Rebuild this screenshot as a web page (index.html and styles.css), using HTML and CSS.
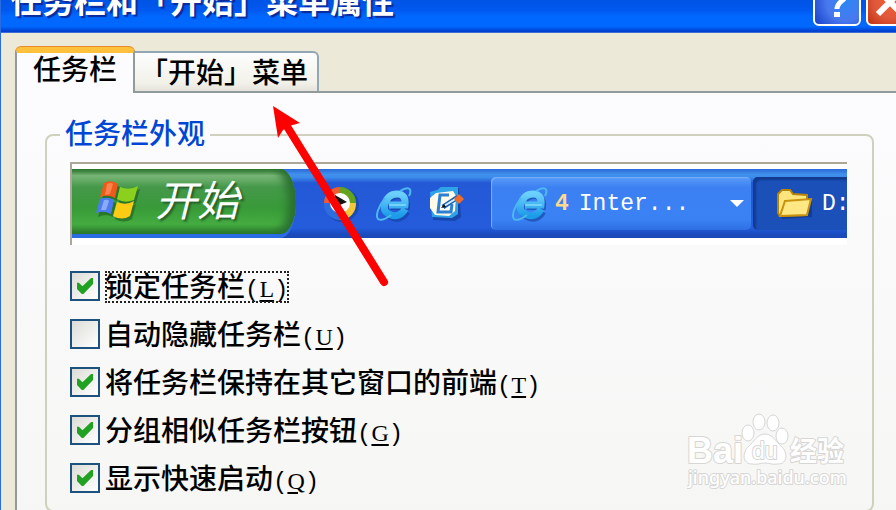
FILE: index.html
```html
<!DOCTYPE html>
<html lang="zh-CN">
<head>
    <meta charset="UTF-8">
    <meta name="viewport" content="width=device-width, initial-scale=1.0">
    <title>任务栏和「开始」菜单属性</title>
    <link rel="stylesheet" href="styles.css">
</head>
<body>
    <!-- shared icon shapes -->
    <svg class="defs" width="0" height="0" aria-hidden="true">
        <defs>
            <linearGradient id="ieBlue" x1="0" y1="0" x2="0" y2="1">
                <stop offset="0" stop-color="#6cd0fc"/>
                <stop offset="1" stop-color="#1c9be8"/>
            </linearGradient>
            <symbol id="ie" viewBox="0 0 36 36">
                <path d="M31 26 C28 32 22 34 17 32 C11 30 9 26 10 20 C12 13 16 10 22 10 C29 10 32 14 31 21 L15 21" fill="none" stroke="#123f9c" stroke-width="6" opacity="0.6"/>
                <path d="M29 23 C26 29 20 31 15 29 C9 27 7 23 9 18 C11 11 15 8 21 8 C27 8 30 12 29 19 L13 19" fill="none" stroke="url(#ieBlue)" stroke-width="7"/>
                <path d="M13 19 L30 19" stroke="#a8ecff" stroke-width="1"/>
                <path d="M24 5 C32 0 37 2 33 10 M9 12 C3 20 -1 29 2 33 C5 35 11 32 15 29" fill="none" stroke="#4cb8ee" stroke-width="2"/>
            </symbol>
        </defs>
    </svg>

    <div class="window">
        <header class="titlebar">
            <h1>任务栏和「开始」菜单属性</h1>
            <div class="controls">
                <button type="button" class="ctl help" aria-label="帮助">
                    <svg width="30" height="40" viewBox="0 0 30 40"><path d="M6 10 C6 1 24 1 24 10 C24 17 15 17 15 25" fill="none" stroke="#fff" stroke-width="5"/><rect x="12" y="28" width="6" height="5" fill="#fff"/></svg>
                </button>
                <button type="button" class="ctl close" aria-label="关闭">
                    <svg width="30" height="40" viewBox="0 0 30 40"><path d="M3 30 L27 6 M3 6 L27 30" stroke="#fff" stroke-width="6"/></svg>
                </button>
            </div>
        </header>

        <nav class="tabs">
            <button type="button" class="tab active">任务栏</button>
            <button type="button" class="tab">「开始」菜单</button>
        </nav>

        <main class="panel">
            <fieldset>
                <legend>任务栏外观</legend>
                <div class="group">
                    <div class="preview">
                        <div class="taskbar">
                            <div class="start">
                                <svg width="46" height="42" viewBox="0 0 46 42">
                                    <g transform="translate(2 2)" fill="#174d18" opacity="0.5">
                                        <path d="M8 3 Q15 -1 22 4 L19 18 Q12 13 4 17Z M24 7 Q33 11 42 6 L38 20 Q29 24 21 19Z M4 20 Q11 16 18 20 L15 34 Q8 30 0 34Z M21 22 Q30 26 38 21 L34 36 Q26 41 17 36Z"/>
                                    </g>
                                    <path d="M8 2 Q15 -2 22 3 L19 17 Q12 13 4 16Z" fill="#ef5a1c"/>
                                    <path d="M11 3 Q15 1 17 3 L14 13 L9 14Z" fill="#ffa070" opacity="0.6"/>
                                    <path d="M24 6 Q33 10 42 5 L38 19 Q29 23 21 18Z" fill="#8ad01c"/>
                                    <path d="M4 18 Q11 15 18 19 L15 33 Q8 29 0 32Z" fill="#4a7cf0"/>
                                    <path d="M8 19 Q12 18 13 20 L10 29 L5 29Z" fill="#b7ccff" opacity="0.6"/>
                                    <path d="M21 21 Q30 25 38 20 L34 35 Q26 40 17 35Z" fill="#fccc14"/>
                                </svg>
                                <span>开始</span>
                            </div>
                            <div class="quick">
                                <svg width="36" height="36" viewBox="0 0 36 36">
                                    <circle cx="19" cy="19" r="17" fill="#12388f" opacity="0.5"/>
                                    <path d="M17 17 L17 1 A16 16 0 0 0 1 17Z" fill="#ef5a30"/>
                                    <path d="M17 17 L17 1 A16 16 0 0 1 33 17Z" fill="#64a41c"/>
                                    <path d="M17 17 L33 17 A16 16 0 0 1 17 34Z" fill="#f4c63a"/>
                                    <path d="M17 17 L17 34 A16 16 0 0 1 1 17Z" fill="#2c6ee0"/>
                                    <circle cx="17" cy="17" r="10" fill="#fff"/>
                                    <path d="M12 9 L24 16 L12 21Z" fill="#111"/>
                                </svg>
                                <svg width="36" height="36"><use href="#ie"/></svg>
                                <svg width="36" height="36" viewBox="0 0 36 36">
                                    <path d="M3 8 L9 3 L30 2 L32 31 L26 35 L4 34Z" fill="#12388f" opacity="0.6"/>
                                    <path d="M1 6 L8 4 L12 1 L29 1 L29 28 L23 32 L3 31Z" fill="#2fa3e8"/>
                                    <path d="M7 7 L24 5 L27 10 L26 25 L20 30 L6 29 L1 22 L1 12Z" fill="#fffbe6"/>
                                    <path d="M20 9 L11 9 L9 26 L22 26 L23 18" fill="none" stroke="#2c7fd4" stroke-width="3"/>
                                    <path d="M14 21 L29 11" stroke="#1a5fb8" stroke-width="5"/>
                                    <path d="M15 20 L28 12" stroke="#d7efff" stroke-width="2"/>
                                    <path d="M12 22 L15 18 L17 21Z" fill="#111"/>
                                    <path d="M25 13 L30 8 L35 13 L30 18Z" fill="#f06a28"/>
                                </svg>
                            </div>
                            <div class="task">
                                <svg width="36" height="36"><use href="#ie"/></svg>
                                <b>4</b>
                                <span>Inter...</span>
                                <i class="caret"></i>
                            </div>
                            <div class="task pressed">
                                <svg width="36" height="30" viewBox="0 0 36 30">
                                    <path d="M3 6 L8 3 L16 4 L19 8 L35 9 L35 28 L5 30Z" fill="#0d2f80" opacity="0.6"/>
                                    <path d="M1 5 L5 1 L13 1 L16 5 L30 6 L30 26 L3 27 L1 24Z" fill="#fbe57c" stroke="#b98508" stroke-width="2"/>
                                    <path d="M8 12 L34 10 L30 26 L3 27Z" fill="#ffe784" stroke="#c8920c" stroke-width="2"/>
                                </svg>
                                <span>D:</span>
                            </div>
                        </div>
                    </div>

                    <div class="options">
                        <label class="option focused"><input type="checkbox" checked><span>锁定任务栏<kbd>(<u>L</u>)</kbd></span></label>
                        <label class="option"><input type="checkbox"><span>自动隐藏任务栏<kbd>(<u>U</u>)</kbd></span></label>
                        <label class="option"><input type="checkbox" checked><span>将任务栏保持在其它窗口的前端<kbd>(<u>T</u>)</kbd></span></label>
                        <label class="option"><input type="checkbox" checked><span>分组相似任务栏按钮<kbd>(<u>G</u>)</kbd></span></label>
                        <label class="option"><input type="checkbox" checked><span>显示快速启动<kbd>(<u>Q</u>)</kbd></span></label>
                    </div>
                </div>
            </fieldset>
        </main>

        <!-- arrow pointing at the second tab -->
        <svg class="arrow" width="120" height="184" viewBox="0 0 120 184" aria-hidden="true">
            <path d="M16 22 L112 176" stroke="#f00" stroke-width="8" stroke-linecap="round"/>
            <path d="M1 0 L28 17 L17 20 L11 24 L6 32Z" fill="#f00"/>
        </svg>

        <svg class="watermark" width="166" height="84" viewBox="0 0 166 84" role="img" aria-label="Baidu 经验">
            <g fill="#fff" stroke="#d6d6d4" stroke-width="1">
                <ellipse cx="61" cy="22" rx="6" ry="8"/>
                <ellipse cx="72" cy="11" rx="6" ry="8"/>
                <ellipse cx="86" cy="12" rx="6" ry="8"/>
                <ellipse cx="95" cy="25" rx="6" ry="8"/>
                <path d="M78 23 C86 23 89 31 94 35 C101 41 101 53 91 53 C85 54 83 52 78 52 C73 52 71 54 65 53 C55 53 55 41 62 35 C67 31 70 23 78 23Z"/>
            </g>
            <text class="wm-name" x="0" y="52">Bai</text>
            <text class="wm-du" x="65" y="48">du</text>
            <text class="wm-cjk" x="103" y="50">经验</text>
            <text class="wm-url" x="1" y="73">jingyan.baidu.com</text>
        </svg>
    </div>
</body>
</html>
```
FILE: styles.css
```css
* {
    box-sizing: border-box;
}
body {
    margin: 0;
    overflow: hidden;
    background-color: #ece9d8;
    font-family: "Liberation Sans", "Noto Sans CJK SC", sans-serif;
    font-size: 28px;
    font-weight: 500;
    line-height: 30px;
    color: #000;
}
svg {
    display: block;
    flex: none;
}
.defs {
    position: absolute;
}
.window {
    position: relative;
    border-left: 1px solid #2a6be0;
    overflow: hidden;
    min-height: 100vh;
}

/* title bar */
.titlebar {
    display: flex;
    justify-content: space-between;
    align-items: flex-end;
    height: 33px;
    padding-left: 9px;
    background: linear-gradient(#0054e6 0%, #0058ee 30%, #0068ff 50%, #0068ff 80%, #0040d0 94%, #0040d0 97%, #7d9cd8 100%);
}
.titlebar h1 {
    margin: 0;
    padding-bottom: 15px;
    font-size: 32px;
    line-height: 32px;
    font-weight: bold;
    color: #fff;
    text-shadow: 2px 2px 1px #0a2a9c;
    white-space: nowrap;
}
.controls {
    display: flex;
    gap: 5px;
    margin-right: -18px;
    padding-bottom: 7px;
}
.ctl {
    display: flex;
    justify-content: center;
    align-items: flex-end;
    width: 48px;
    height: 48px;
    padding: 0;
    border: 2px solid #fff;
    border-radius: 6px;
}
.help {
    background: radial-gradient(circle at 70% 50%, #2a86f4, #4a78ee 50%, #1340c8);
}
.close {
    background: radial-gradient(circle at 50% 50%, #f06030, #e0583c 50%, #c03010);
}

/* tabs */
.tabs {
    display: flex;
    align-items: flex-end;
    padding: 14px 0 0 14px;
}
.tab {
    height: 40px;
    padding: 4px 9px 0 5px;
    font: inherit;
    color: #000;
    background: linear-gradient(#fdfdfd, #f2f1e9 80%, #e4e2da);
    border: 2px solid #91a7b4;
    border-left: 0;
    border-bottom: 0;
    border-radius: 0 6px 0 0;
    white-space: nowrap;
}
.tab.active {
    position: relative;
    z-index: 1;
    height: 46px;
    margin-bottom: -2px;
    padding: 0 16px 4px;
    background: #fcfcfe;
    border: 2px solid #919b9c;
    border-top: 6px solid #ffc13c;
    border-bottom: 0;
    border-radius: 6px 6px 0 0;
    box-shadow: 0 -1px 0 #e68b2c;
}
.panel {
    margin-left: 14px;
    padding: 28px 22px 8px 28px;
    border: 2px solid #919b9c;
    border-right: 0;
    background: linear-gradient(#fcfcfe, #f6f6f4);
}

/* group box */
fieldset {
    min-width: 0;
    margin: 0;
    padding: 0 13px 17px;
    border: 2px solid #d0d0bf;
    border-radius: 8px;
}
legend {
    padding: 0 5px;
    line-height: 28px;
    color: #0046d5;
}
.group {
    padding: 13px 12px 0 10px;
}
.preview {
    padding: 5px 0 7px;
    background-color: #fff;
    border-top: 2px solid #aca899;
    border-left: 2px solid #aca899;
}
.taskbar {
    display: flex;
    align-items: center;
    height: 69px;
    overflow: hidden;
    background: linear-gradient(#2a6ad8 0%, #4090ec 8%, #3c8cea 12%, #2459d6 20%, #245cdc 85%, #1a4cc0 94%, #1c48b4 100%);
    color: #fff;
}
.start {
    flex: none;
    display: flex;
    align-items: center;
    gap: 13px;
    width: 224px;
    height: 69px;
    padding-left: 24px;
    border-bottom: 4px solid #2a6ce4;
    border-radius: 0 16px 16px 0 / 0 36px 36px 0;
    background: linear-gradient(#2f7a30 0%, #7cb87a 10%, #45984a 28%, #389a38 60%, #44ac40 85%, #2c7c2c 100%);
    box-shadow: inset -8px 0 8px #2a7030;
    font-size: 42px;
    line-height: 50px;
    font-style: italic;
    font-weight: 400;
    text-shadow: 2px 2px 2px #24602a;
}
.quick {
    flex: none;
    display: flex;
    gap: 17px;
    margin: 0 26px 0 27px;
}
.task {
    flex: none;
    display: flex;
    align-items: center;
    width: 260px;
    height: 53px;
    padding: 0 7px 0 21px;
    border-radius: 5px;
    background: linear-gradient(#5a9cf8, #3c80f2 20%, #3a82f4 80%, #2f6fe4);
    box-shadow: inset 1px 1px 1px #78b0fa;
    font-family: "Liberation Mono", monospace;
    font-size: 23px;
}
.task b {
    margin: 0 10px 0 7px;
    color: #ffd890;
}
.caret {
    margin-left: auto;
    border: 7px solid transparent;
    border-top-color: #fff;
    border-bottom: 0;
}
.task.pressed {
    gap: 9px;
    margin-left: 2px;
    padding-left: 24px;
    background: #1b50b8;
    box-shadow: inset 3px 3px 2px #123a90;
}

/* check boxes */
.options {
    display: flex;
    flex-direction: column;
    align-items: flex-start;
    gap: 18px;
    margin-top: 26px;
}
.option {
    display: flex;
    gap: 5px;
    height: 30px;
    white-space: nowrap;
}
.option input {
    appearance: none;
    flex: none;
    width: 30px;
    height: 30px;
    margin: 0;
    border: 2px solid #1c5180;
    background: linear-gradient(135deg, #dcdcd7, #fff);
}
.option input:checked::before {
    content: "";
    display: block;
    width: 16px;
    height: 16px;
    margin: 5px;
    background-color: #21a121;
    clip-path: polygon(0 30%, 12% 30%, 34% 52%, 88% 0, 100% 0, 100% 38%, 40% 100%, 30% 100%, 0 68%);
}
.option span {
    height: 32px;
    line-height: 34px;
    outline: 2px dotted transparent;
    outline-offset: -2px;
}
.option.focused span {
    outline-color: #222;
}
.option kbd {
    font-family: "Liberation Mono", monospace;
    font-size: 24px;
}
.option u {
    font-family: "Liberation Serif", serif;
    text-underline-offset: 3px;
}

/* things lying over the window */
.arrow {
    position: absolute;
    left: 271px;
    top: 106px;
}
.watermark {
    position: absolute;
    right: 43px;
    top: 411px;
}
.watermark text {
    fill: #fff;
    stroke: #d6d6d4;
    stroke-width: 2px;
    stroke-linejoin: round;
    paint-order: stroke;
}
.wm-name {
    font-family: "Liberation Sans", sans-serif;
    font-size: 36px;
    font-weight: bold;
}
.wm-du {
    font-family: "Liberation Sans", sans-serif;
    font-size: 23px;
}
.wm-cjk {
    font-family: "Noto Sans CJK SC", sans-serif;
    font-size: 27px;
    font-weight: bold;
}
.wm-url {
    font-family: "Noto Sans", sans-serif;
    font-size: 18px;
}
```
